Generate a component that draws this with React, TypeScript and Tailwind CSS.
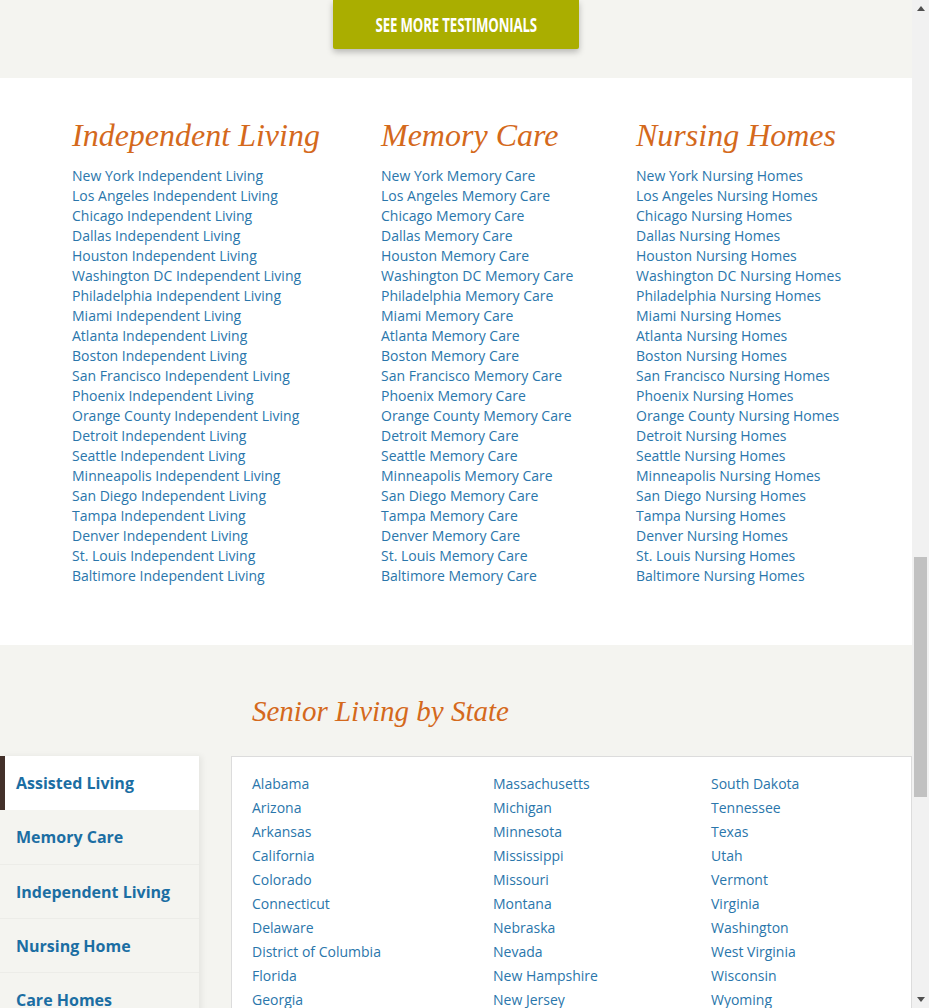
const cities = [
  "New York",
  "Los Angeles",
  "Chicago",
  "Dallas",
  "Houston",
  "Washington DC",
  "Philadelphia",
  "Miami",
  "Atlanta",
  "Boston",
  "San Francisco",
  "Phoenix",
  "Orange County",
  "Detroit",
  "Seattle",
  "Minneapolis",
  "San Diego",
  "Tampa",
  "Denver",
  "St. Louis",
  "Baltimore",
];

const careTypes = [
  { title: "Independent Living", col: "w-[309px]" },
  { title: "Memory Care", col: "w-[255px]" },
  { title: "Nursing Homes", col: "w-[240px]" },
];

const stateCols = [
  [
    "Alabama", "Arizona", "Arkansas", "California", "Colorado", "Connecticut", "Delaware",
    "District of Columbia", "Florida", "Georgia", "Hawaii", "Idaho", "Illinois", "Indiana",
    "Iowa", "Kansas", "Kentucky", "Louisiana", "Maine", "Maryland",
  ],
  [
    "Massachusetts", "Michigan", "Minnesota", "Mississippi", "Missouri", "Montana", "Nebraska",
    "Nevada", "New Hampshire", "New Jersey", "New Mexico", "New York", "North Carolina",
    "North Dakota", "Ohio", "Oklahoma", "Oregon", "Pennsylvania", "Rhode Island", "South Carolina",
  ],
  [
    "South Dakota", "Tennessee", "Texas", "Utah", "Vermont", "Virginia", "Washington",
    "West Virginia", "Wisconsin", "Wyoming",
  ],
];

const tabs = ["Assisted Living", "Memory Care", "Independent Living", "Nursing Home", "Care Homes"];

const sans = "font-['Open_Sans',sans-serif]";
const serif = "font-['Liberation_Serif',serif] italic";

export default function App() {
  return (
    <div className="flex h-[1008px] overflow-hidden bg-[#f4f4f0]">
      <main className={`w-[912px] shrink-0 ${sans}`}>
        {/* testimonials button band */}
        <div className="flex h-[78px] justify-center bg-[#f4f4f0]">
          <button className="flex h-[49px] w-[246px] items-center justify-center rounded-b-[2px] bg-[#aaae00] text-white shadow-[0_3px_6px_rgba(0,0,0,0.25)]">
            <span className="inline-block scale-x-[0.66] whitespace-nowrap text-[20px] font-bold tracking-[-0.2px]">
              SEE MORE TESTIMONIALS
            </span>
          </button>
        </div>

        {/* city links */}
        <section className="flex h-[567px] bg-white pl-[72px] pt-[37px]">
          {careTypes.map((t) => (
            <div key={t.title} className={t.col}>
              <h2 className={`${serif} text-[32px] leading-[40px] text-[#d4691c]`}>{t.title}</h2>
              <ul className="mt-[11px] text-[14px] leading-[20px] text-[#2a76ab]">
                {cities.map((c) => (
                  <li key={c}>
                    {c} {t.title}
                  </li>
                ))}
              </ul>
            </div>
          ))}
        </section>

        {/* by state */}
        <section className="pt-[48px]">
          <h2 className={`${serif} pl-[252px] text-[29px] leading-[36px] text-[#d4691c]`}>
            Senior Living by State
          </h2>
          <div className="mt-[27px] flex">
            <ul className="w-[199px] shrink-0 shadow-[3px_0_6px_rgba(0,0,0,0.06)]">
              {tabs.map((t, i) => (
                <li
                  key={t}
                  className={
                    i === 0
                      ? "flex h-[54px] items-center border-l-[5px] border-[#43302a] bg-white pl-[11px] text-[16px] font-bold text-[#1b6ea3]"
                      : i === 1
                        ? "flex h-[54px] items-center pl-[16px] text-[16px] font-bold text-[#1b6ea3]"
                        : "flex h-[54px] items-center border-t border-[#ecece8] pl-[16px] text-[16px] font-bold text-[#1b6ea3]"
                  }
                >
                  {t}
                </li>
              ))}
            </ul>
            <div className="ml-[32px] flex flex-1 border border-[#dcdcdc] bg-white pl-[20px] pt-[15px]">
              {stateCols.map((col, i) => (
                <ul
                  key={i}
                  className={`${i === 0 ? "w-[241px]" : i === 1 ? "w-[218px]" : "w-[200px]"} text-[14px] leading-[24px] text-[#2a76ab]`}
                >
                  {col.map((s) => (
                    <li key={s}>{s}</li>
                  ))}
                </ul>
              ))}
            </div>
          </div>
        </section>
      </main>

      {/* window scrollbar */}
      <div className="flex w-[17px] shrink-0 flex-col bg-[#f1f1f1]">
        <div className="flex h-[17px] items-center justify-center">
          <svg width="8" height="5" viewBox="0 0 8 5">
            <path d="M0 5L4 0L8 5Z" fill="#505050" />
          </svg>
        </div>
        <div className="h-[540px]" />
        <div className="mx-[2px] h-[240px] bg-[#c1c1c1]" />
        <div className="flex-1" />
        <div className="flex h-[17px] items-center justify-center">
          <svg width="8" height="5" viewBox="0 0 8 5">
            <path d="M0 0L8 0L4 5Z" fill="#505050" />
          </svg>
        </div>
      </div>
    </div>
  );
}
